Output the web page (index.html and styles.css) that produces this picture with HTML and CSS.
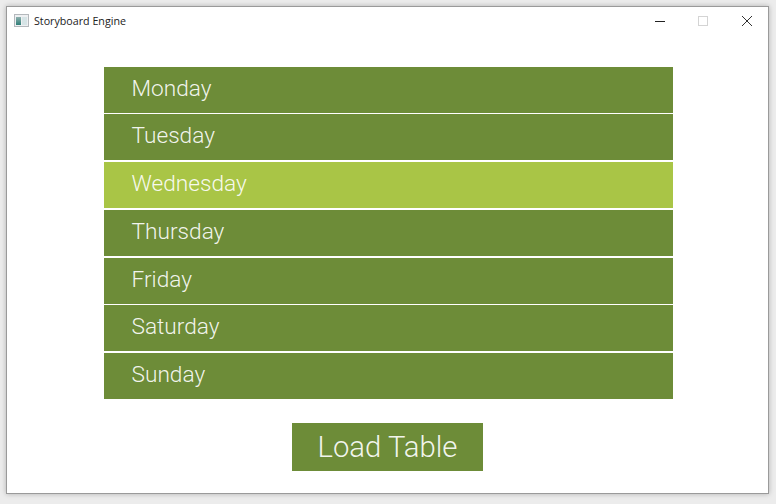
FILE: index.html
```html
<!DOCTYPE html>
<html>
<head>
  <meta charset="UTF-8">
  <link rel="stylesheet" href="styles.css">
</head>
<body>
  <div class="window">
    <div class="title-bar">
      <svg class="app-icon" width="15" height="14" viewBox="0 0 15 14">
        <defs>
          <linearGradient id="pane" x1="0" y1="0" x2="0" y2="1">
            <stop offset="0" stop-color="#8fb0ae"/>
            <stop offset="1" stop-color="#2f7f78"/>
          </linearGradient>
        </defs>
        <rect x="0.5" y="0.5" width="14" height="12" fill="#eef0f2" stroke="#b4b8bc"/>
        <rect x="2" y="3" width="5" height="8" fill="url(#pane)"/>
        <rect x="8" y="3" width="5" height="8" fill="#d6e4e6"/>
      </svg>
      <span class="app-title">Storyboard Engine</span>
      <div class="window-controls">
        <svg class="control" width="12" height="12" viewBox="0 0 12 12">
          <path d="M2 6.5H12" stroke="#222" stroke-width="1"/>
        </svg>
        <svg class="control" width="12" height="12" viewBox="0 0 12 12">
          <rect x="1.5" y="1.5" width="9" height="9" fill="none" stroke="#d4d4d4"/>
        </svg>
        <svg class="control" width="12" height="12" viewBox="0 0 12 12">
          <path d="M1 1L11 11M11 1L1 11" stroke="#333" stroke-width="1"/>
        </svg>
      </div>
    </div>
    <div class="content">
      <ul class="day-list">
        <li class="day-item">Monday</li>
        <li class="day-item">Tuesday</li>
        <li class="day-item selected">Wednesday</li>
        <li class="day-item">Thursday</li>
        <li class="day-item">Friday</li>
        <li class="day-item">Saturday</li>
        <li class="day-item">Sunday</li>
      </ul>
      <button class="load-btn">Load Table</button>
    </div>
  </div>
</body>
</html>
```

FILE: styles.css
```css
html, body {
  height: 100%;
}
body {
  margin: 0;
  background: #ececec;
  padding: 6px 7px 10px 6px;
  box-sizing: border-box;
  font-family: Roboto, sans-serif;
}
.window {
  height: 488px;
  background: #fff;
  border: 1px solid #9a9a9a;
  box-sizing: border-box;
  box-shadow: 0 0 5px rgba(0, 0, 0, 0.25);
  display: flex;
  flex-direction: column;
}
.title-bar {
  height: 27px;
  display: flex;
  align-items: center;
  padding-left: 7px;
  flex-shrink: 0;
}
.app-icon {
  margin-right: 5px;
}
.app-title {
  font-family: "Open Sans", sans-serif;
  font-size: 10.7px;
  color: #222;
}
.window-controls {
  margin-left: auto;
  display: flex;
  gap: 32px;
  padding-right: 15px;
}
.content {
  display: flex;
  flex-direction: column;
  align-items: center;
  padding-top: 32.5px;
}
.day-list {
  list-style: none;
  margin: 0 0 24px 2px;
  padding: 0;
  width: 569px;
  display: flex;
  flex-direction: column;
  gap: 1.75px;
}
.day-item {
  height: 46px;
  line-height: 44px;
  padding-left: 27.5px;
  background: #6d8c38;
  color: rgba(255, 255, 255, 0.92);
  font-size: 22.67px;
  font-weight: 300;
}
.day-item.selected {
  background: #a9c546;
}
.load-btn {
  width: 191px;
  height: 48px;
  padding: 0;
  border: none;
  background: #6d8c38;
  color: rgba(255, 255, 255, 0.92);
  font-family: Roboto, sans-serif;
  font-size: 29.3px;
  font-weight: 300;
}
```
